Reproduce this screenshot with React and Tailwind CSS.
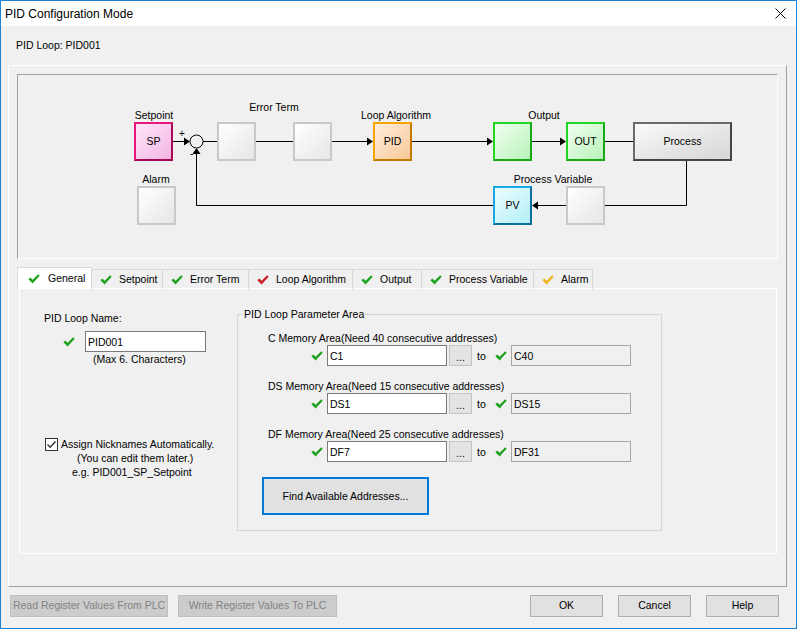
import React from 'react';

function Check({ color = '#1da31d' }) {
    return (
        <svg width="12" height="10" viewBox="0 0 12 10" className="shrink-0">
            <path d="M0.4 5.3 L2.3 3.5 L4.6 5.8 L10.2 0.3 L11.7 1.8 L4.6 9.4 Z" fill={color} />
        </svg>
    );
}

function Arrow({ x, y, dir }) {
    // small filled arrow head, tip at (x, y)
    let pts;
    if (dir === 'right') pts = `${x},${y} ${x - 6},${y - 4} ${x - 6},${y + 4}`;
    else if (dir === 'left') pts = `${x},${y} ${x + 6},${y - 4} ${x + 6},${y + 4}`;
    else pts = `${x},${y} ${x - 4},${y + 6} ${x + 4},${y + 6}`;
    return <polygon points={pts} fill="#000" />;
}

function Diagram() {
    const box = 'absolute w-[39px] h-[39px] border-2 flex items-center justify-center';
    const gray = `${box} border-[#c9c9c9] bg-linear-to-br from-white to-[#e6e6e6]`;
    const green = `${box} border-[#22d622] border-b-[#17a817] border-r-[#17a817] bg-linear-to-br from-[#effff0] to-[#b9f2b9]`;
    const label = 'absolute leading-[14px] text-center';

    return (
        <div className="relative w-[761px] h-[185px] border border-[#a0a0a0] border-r-white border-b-white">
            <svg className="absolute left-0 top-0" width="759" height="183">
                <g stroke="#000" strokeWidth="1" fill="none">
                    <line x1="155" y1="66.5" x2="168" y2="66.5" />
                    <line x1="185" y1="66.5" x2="350" y2="66.5" />
                    <line x1="394" y1="66.5" x2="470" y2="66.5" />
                    <line x1="514" y1="66.5" x2="543" y2="66.5" />
                    <line x1="587" y1="66.5" x2="615" y2="66.5" />
                    <polyline points="668.5,86 668.5,130.5 520,130.5" />
                    <polyline points="475,130.5 178.5,130.5 178.5,78" />
                    <circle cx="178.5" cy="66.5" r="6.5" />
                </g>
                <Arrow x={172} y={66.5} dir="right" />
                <Arrow x={355} y={66.5} dir="right" />
                <Arrow x={475} y={66.5} dir="right" />
                <Arrow x={548} y={66.5} dir="right" />
                <Arrow x={514} y={130.5} dir="left" />
                <Arrow x={178.5} y={73} dir="up" />
            </svg>

            <span className="absolute left-[161px] top-[53px] text-[10px] leading-[12px]">+</span>
            <span className="absolute left-[172px] top-[73px] text-[10px] leading-[12px]">-</span>

            <div className={`${label} left-[96px] w-[80px] top-[33px]`}>Setpoint</div>
            <div className={`${label} left-[98px] w-[80px] top-[97px]`}>Alarm</div>
            <div className={`${label} left-[206px] w-[100px] top-[25px]`}>Error Term</div>
            <div className={`${label} left-[318px] w-[120px] top-[33px]`}>Loop Algorithm</div>
            <div className={`${label} left-[476px] w-[100px] top-[33px]`}>Output</div>
            <div className={`${label} left-[475px] w-[120px] top-[97px]`}>Process Variable</div>

            <div className={`${box} left-[116px] top-[47px] border-[#e5177f] border-b-[#a80a56] border-r-[#a80a56] bg-linear-to-br from-[#fce6f7] to-[#f4b4e5]`}>SP</div>
            <div className={`${gray} left-[119px] top-[111px]`} />
            <div className={`${gray} left-[199px] top-[47px]`} />
            <div className={`${gray} left-[275px] top-[47px]`} />
            <div className={`${box} left-[355px] top-[47px] border-[#f6a500] border-b-[#c27a00] border-r-[#c27a00] bg-linear-to-br from-[#fdeedd] to-[#f8c896]`}>PID</div>
            <div className={`${green} left-[475px] top-[47px]`} />
            <div className={`${green} left-[548px] top-[47px]`}>OUT</div>
            <div className="absolute left-[615px] top-[47px] w-[99px] h-[39px] border-2 border-[#6a6a6a] border-b-[#454545] border-r-[#454545] bg-linear-to-br from-[#fafafa] to-[#d6d6d6] flex items-center justify-center">
                Process
            </div>
            <div className={`${box} left-[475px] top-[111px] border-[#19aae6] border-b-[#0b6e9c] border-r-[#0b6e9c] bg-linear-to-br from-[#ecfdff] to-[#b3eef8]`}>PV</div>
            <div className={`${gray} left-[548px] top-[111px]`} />
        </div>
    );
}

const tabs = [
    { name: 'Setpoint', w: 'w-[71px]', color: '#1da31d' },
    { name: 'Error Term', w: 'w-[86px]', color: '#1da31d' },
    { name: 'Loop Algorithm', w: 'w-[104px]', color: '#cc1d24' },
    { name: 'Output', w: 'w-[69px]', color: '#1da31d' },
    { name: 'Process Variable', w: 'w-[112px]', color: '#1da31d' },
    { name: 'Alarm', w: 'w-[59px]', color: '#f2b31c' },
];

function AddressRow({ from, to }) {
    return (
        <div className="flex items-center h-[21px] pl-[73px]">
            <Check />
            <input
                readOnly
                value={from}
                className="ml-[4px] w-[120px] h-[21px] border border-[#7a7a7a] bg-white px-[2px] text-[10.5px] outline-none"
            />
            <div className="ml-[2px] w-[23px] h-[21px] border border-[#c4c4c4] bg-[#e3e3e3] flex items-end justify-center pb-[3px] leading-none">
                ...
            </div>
            <span className="ml-[5px] w-[13px]">to</span>
            <span className="ml-[5px]"><Check /></span>
            <input
                readOnly
                value={to}
                className="ml-[4px] w-[120px] h-[21px] border border-[#a6a6a6] bg-[#f0f0f0] px-[2px] text-[10.5px] outline-none"
            />
        </div>
    );
}

function GeneralTab() {
    return (
        <div className="flex pl-[24px]">
            <div className="w-[193px] pt-[22px] leading-[14px]">
                <div>PID Loop Name:</div>
                <div className="flex items-center mt-[6px]">
                    <span className="ml-[19px]"><Check /></span>
                    <input
                        readOnly
                        value="PID001"
                        className="ml-[10px] w-[121px] h-[21px] border border-[#7a7a7a] bg-white px-[2px] text-[10.5px] outline-none"
                    />
                </div>
                <div className="pl-[49px]">(Max 6. Characters)</div>
                <div className="flex items-center mt-[71px] ml-[1px]">
                    <div className="w-[13px] h-[13px] border border-[#333] bg-white flex items-center justify-center">
                        <svg width="11" height="11" viewBox="0 0 11 11">
                            <path d="M1.5 5.5 L4.2 8.2 L9.5 2.5" stroke="#333" strokeWidth="1.4" fill="none" />
                        </svg>
                    </div>
                    <span className="ml-[3px]">Assign Nicknames Automatically.</span>
                </div>
                <div className="pl-[33px]">(You can edit them later.)</div>
                <div className="pl-[28px]">e.g. PID001_SP_Setpoint</div>
            </div>

            <fieldset className="mt-[18px] w-[425px] h-[224px] border border-[#d5d5d5] leading-[14px]">
                <legend className="ml-[5px] px-[1px]">PID Loop Parameter Area</legend>
                <div className="pl-[30px] mt-[10px]">C Memory Area(Need 40 consecutive addresses)</div>
                <AddressRow from="C1" to="C40" />
                <div className="pl-[30px] mt-[13px]">DS Memory Area(Need 15 consecutive addresses)</div>
                <AddressRow from="DS1" to="DS15" />
                <div className="pl-[30px] mt-[13px]">DF Memory Area(Need 25 consecutive addresses)</div>
                <AddressRow from="DF7" to="DF31" />
                <button className="ml-[24px] mt-[15px] w-[167px] h-[38px] border-2 border-[#0078d7] bg-[#e1e1e1] text-[10.5px]">
                    Find Available Addresses...
                </button>
            </fieldset>
        </div>
    );
}

export default function App() {
    return (
        <div className="w-[797px] h-[629px] border border-[#1883d7] bg-[#f0f0f0] flex flex-col overflow-hidden text-black text-[10.5px] font-['Liberation_Sans',Arial,sans-serif]">
            <div className="h-[25px] shrink-0 bg-white flex items-center justify-between pl-[4px] pr-[10px]">
                <span className="text-[12px]">PID Configuration Mode</span>
                <svg width="11" height="11" viewBox="0 0 11 11">
                    <path d="M0.5 0.5 L10.5 10.5 M10.5 0.5 L0.5 10.5" stroke="#000" strokeWidth="1" />
                </svg>
            </div>

            <div className="h-[39px] shrink-0 flex items-center pl-[15px]">PID Loop: PID001</div>

            <div className="ml-[7px] w-[779px] h-[522px] shrink-0 border border-white border-r-[#a0a0a0] border-b-[#a0a0a0] pl-[8px] pt-[8px]">
                <Diagram />

                <div className="mt-[8px] flex items-end h-[22px] relative z-10">
                    <div className="w-[75px] h-[22px] bg-white border border-[#d9d9d9] border-b-0 flex items-center pl-[10px] gap-[8px]">
                        <Check />
                        <span>General</span>
                    </div>
                    {tabs.map((t) => (
                        <div
                            key={t.name}
                            className={`${t.w} h-[20px] border-t border-r border-[#d9d9d9] flex items-center pl-[8px] gap-[7px]`}
                        >
                            <Check color={t.color} />
                            <span>{t.name}</span>
                        </div>
                    ))}
                </div>

                <div className="ml-[2px] w-[758px] h-[266px] border border-white -mt-px">
                    <GeneralTab />
                </div>
            </div>

            <div className="mt-[8px] flex items-center pl-[9px] pr-[17px] text-[10.5px]">
                <button className="w-[158px] h-[22px] bg-[#cccccc] border border-[#bfbfbf] text-[#838383]">
                    Read Register Values From PLC
                </button>
                <button className="ml-[10px] w-[159px] h-[22px] bg-[#cccccc] border border-[#bfbfbf] text-[#838383]">
                    Write Register Values To PLC
                </button>
                <div className="flex-1" />
                <button className="w-[73px] h-[22px] bg-[#e1e1e1] border border-[#adadad]">OK</button>
                <button className="ml-[15px] w-[73px] h-[22px] bg-[#e1e1e1] border border-[#adadad]">Cancel</button>
                <button className="ml-[15px] w-[73px] h-[22px] bg-[#e1e1e1] border border-[#adadad]">Help</button>
            </div>
        </div>
    );
}
